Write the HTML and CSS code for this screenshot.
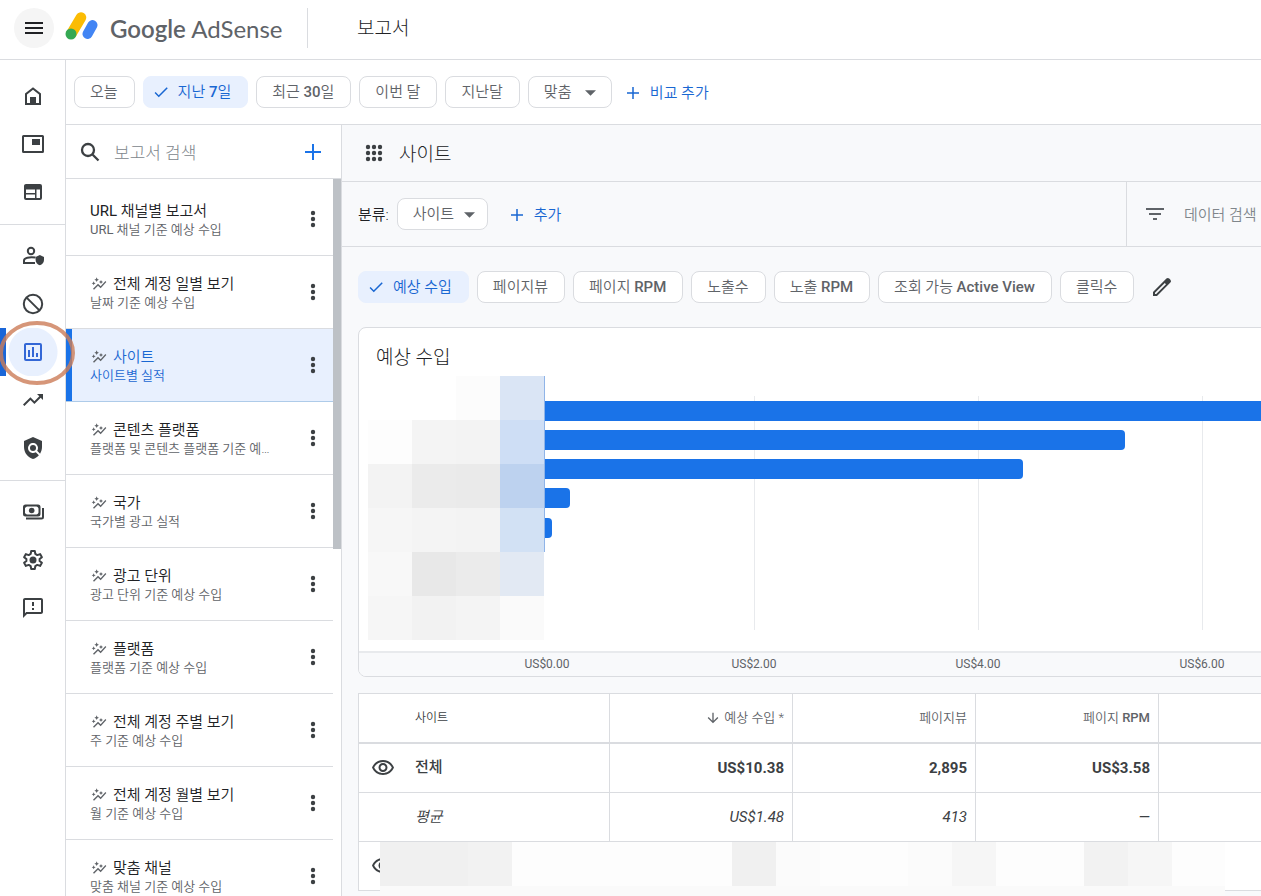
FILE: index.html
```html
<!DOCTYPE html>
<html lang="ko">
<head>
<meta charset="utf-8">
<title>Google AdSense - 보고서</title>
<link rel="stylesheet" href="styles.css">
</head>
<body>
<svg class="defs" aria-hidden="true">
  <symbol id="more" viewBox="0 0 24 24"><circle cx="12" cy="6" r="2.200"/><circle cx="12" cy="12" r="2.200"/><circle cx="12" cy="18" r="2.200"/></symbol>
  <symbol id="spark" viewBox="0 0 24 24"><path d="M14.060 9.940 12 9l2.060-.94L15 6l.94 2.060L18 9l-2.060.94L15 12zM4 14l.94-2.060L7 11l-2.060-.94L4 8l-.94 2.060L1 11l2.060.94zm4.500-5 1.090-2.410L12 5.500 9.590 4.410 8.500 2 7.410 4.410 5 5.500l2.410 1.090zm-4 11.500 6-6.010 4 4L23 8.930l-1.410-1.410-7.090 7.970-4-4L3 19z"/></symbol>
  <symbol id="check" viewBox="0 0 24 24"><path d="M9 16.170 4.830 12l-1.420 1.410L9 19 21 7l-1.410-1.410z"/></symbol>
  <symbol id="plus" viewBox="0 0 24 24"><path d="M20 13h-7v7h-2v-7H4v-2h7V4h2v7h7z"/></symbol>
  <symbol id="caret" viewBox="0 0 12 6"><path d="M0 0h12L6 6z"/></symbol>
  <symbol id="eye" viewBox="0 0 24 24"><path d="M12 6c3.790 0 7.170 2.130 8.820 5.500C19.170 14.870 15.790 17 12 17s-7.170-2.130-8.820-5.500C4.830 8.130 8.210 6 12 6m0-2C7 4 2.730 7.110 1 11.500 2.730 15.890 7 19 12 19s9.270-3.110 11-7.500C21.270 7.110 17 4 12 4zm0 5c1.380 0 2.500 1.120 2.500 2.500S13.380 14 12 14s-2.500-1.120-2.500-2.500S10.620 9 12 9m0-2c-2.480 0-4.500 2.020-4.500 4.500S9.520 16 12 16s4.500-2.020 4.500-4.500S14.480 7 12 7z"/></symbol>
</svg>

<header class="topbar">
  <button class="menu-button" aria-label="메뉴"><svg class="icon" viewBox="0 0 24 24"><path d="M3 18h18v-2H3v2zm0-5h18v-2H3v2zm0-7v2h18V6H3z"/></svg></button>
  <a class="brand" href="#">
    <svg class="brand-mark" viewBox="0 0 34 30" aria-hidden="true">
      <path d="M6.500 22.500 16 6.500" stroke="#fbbc04" stroke-width="10.500" stroke-linecap="round"/>
      <path d="M22.500 23 27.500 14" stroke="#4285f4" stroke-width="10" stroke-linecap="round"/>
      <circle cx="6" cy="23" r="5.500" fill="#34a853"/>
    </svg>
    <span class="brand-name"><b>Google</b> AdSense</span>
  </a>
  <h1 class="page-title">보고서</h1>
</header>

<div class="shell">
  <nav class="rail" aria-label="기본 메뉴">
    <a class="rail-item" href="#" aria-label="홈"><svg class="icon" viewBox="0 0 24 24"><path fill-rule="evenodd" d="M4 9.500 12 3.300l8 6.200V21H4zm2 1V19h3v-6h6v6h3v-8.500l-6-4.700z"/></svg></a>
    <a class="rail-item" href="#" aria-label="광고"><svg class="icon" viewBox="0 0 24 24"><path fill-rule="evenodd" d="M2.500 3h19A1.500 1.500 0 0 1 23 4.500v15a1.500 1.500 0 0 1-1.500 1.500h-19A1.500 1.500 0 0 1 1 19.500v-15A1.500 1.500 0 0 1 2.500 3zM3 5v14h18V5zM11 7h8v6h-8z"/></svg></a>
    <a class="rail-item" href="#" aria-label="사이트"><svg class="icon" viewBox="0 0 24 24"><path fill-rule="evenodd" d="M5 4h14a2 2 0 0 1 2 2v12a2 2 0 0 1-2 2H5a2 2 0 0 1-2-2V6c0-1.100.9-2 2-2zm0 5.500v3.500h9V9.500zM5 14.500V18h9v-3.500zm10.500-5V18H19V9.500z"/></svg></a>
    <hr class="rail-rule">
    <a class="rail-item" href="#" aria-label="개인 정보 보호"><svg class="icon" viewBox="0 0 24 24"><g fill="none" stroke="currentColor" stroke-width="2"><circle cx="10" cy="7" r="3.200"/><path d="M14.500 13.500C8 12.500 3 14 3 16.500V19h11"/></g><path d="m18.800 11 4.200 2v3c0 2.600-1.700 4.400-4.200 5.300-2.500-.9-4.200-2.700-4.200-5.300v-3z"/></svg></a>
    <a class="rail-item" href="#" aria-label="차단 관리"><svg class="icon" viewBox="0 0 24 24"><g fill="none" stroke="currentColor" stroke-width="2"><circle cx="12" cy="12" r="9.200"/><path d="m5.600 5.600 12.800 12.800"/></g></svg></a>
    <a class="rail-item rail-current" href="#" aria-label="보고서" aria-current="page"><svg class="icon" viewBox="0 0 24 24"><path fill-rule="evenodd" d="M5 3h14a2 2 0 0 1 2 2v14a2 2 0 0 1-2 2H5a2 2 0 0 1-2-2V5c0-1.100.9-2 2-2zm0 2v14h14V5zM7 10h2v7H7zM11 7h2v10h-2zM15 13h2v4h-2z"/></svg>
      <svg class="marker" viewBox="0 0 78 66" aria-hidden="true"><ellipse cx="39" cy="33" rx="36" ry="30"/></svg></a>
    <a class="rail-item" href="#" aria-label="최적화"><svg class="icon" viewBox="0 0 24 24"><path d="m16 6 2.290 2.290-4.880 4.880-4-4L2 16.590 3.410 18l6-6 4 4 6.300-6.290L22 12V6z"/></svg></a>
    <a class="rail-item" href="#" aria-label="정책 센터"><svg class="icon" viewBox="0 0 24 24"><path d="m21 5-9-4-9 4v6c0 5.550 3.840 10.740 9 12 2.300-.56 4.330-1.900 5.880-3.710l-3.120-3.120c-1.940 1.290-4.580 1.070-6.290-.64-1.950-1.950-1.950-5.120 0-7.070 1.950-1.950 5.120-1.950 7.070 0 1.710 1.710 1.920 4.350.64 6.290l2.900 2.900C20.290 15.690 21 13.380 21 11z"/><circle cx="12" cy="12" r="3"/></svg></a>
    <hr class="rail-rule">
    <a class="rail-item" href="#" aria-label="지급"><svg class="icon" viewBox="0 0 24 24"><g fill="none" stroke="currentColor" stroke-width="2"><rect x="3" y="5.500" width="15.500" height="10" rx="1.500"/><path d="M5 18.500h15.500a1.500 1.500 0 0 0 1.500-1.500V8"/></g><circle cx="10.700" cy="10.500" r="2.800"/><path d="M3 5.500h3.500L3 9zM18.500 5.500H15l3.500 3.500zM3 15.500h3.500L3 12zM18.500 15.500H15l3.500-3.500z"/></svg></a>
    <a class="rail-item" href="#" aria-label="계정"><svg class="icon" viewBox="0 0 24 24"><path d="M10.200 3h3.600l.5 2.900 2 1.200 2.800-1 1.800 3.100-2.300 1.900v1.800l2.300 1.900-1.800 3.100-2.800-1-2 1.200-.5 2.900h-3.600l-.5-2.900-2-1.200-2.800 1-1.800-3.100 2.300-1.900v-1.800L3.100 9.200l1.800-3.100 2.800 1 2-1.200z" fill="none" stroke="currentColor" stroke-width="2" stroke-linejoin="round"/><circle cx="12" cy="12" r="3.500"/></svg></a>
    <a class="rail-item" href="#" aria-label="의견"><svg class="icon" viewBox="0 0 24 24"><path d="M20 2H4c-1.100 0-1.990.9-1.990 2L2 22l4-4h14c1.100 0 2-.9 2-2V4c0-1.100-.9-2-2-2zm0 14H5.170l-1.170 1.170V4h16zM11 12h2v2h-2zm0-6h2v4h-2z"/></svg></a>
  </nav>

  <div class="workspace">
    <div class="chip-row date-row">
      <button class="chip">오늘</button>
      <button class="chip chip-on"><svg class="icon-sm"><use href="#check"/></svg><span>지난 <b>7</b>일</span></button>
      <button class="chip"><span>최근 <b>30</b>일</span></button>
      <button class="chip">이번 달</button>
      <button class="chip">지난달</button>
      <div class="drop drop-wide"><select class="chip" aria-label="기간"><option>맞춤</option></select><svg class="caret"><use href="#caret"/></svg></div>
      <button class="link-button"><svg class="icon-sm"><use href="#plus"/></svg>비교 추가</button>
    </div>

    <div class="columns">
      <aside class="reports">
        <div class="report-search">
          <svg class="icon" viewBox="0 0 24 24"><path d="M10 4a6 6 0 1 0 0 12 6 6 0 0 0 0-12zm4.500 10.500 6 6" fill="none" stroke="currentColor" stroke-width="2.300"/></svg>
          <input type="text" aria-label="보고서 검색" placeholder="보고서 검색">
          <button class="icon-button add" aria-label="새 보고서"><svg class="icon"><use href="#plus"/></svg></button>
        </div>
        <div class="report-scroll">
          <ul class="report-list">
            <li class="report"><a href="#"><span class="report-name"><span><i>URL</i> 채널별 보고서</span></span><span class="report-note"><i>URL</i> 채널 기준 예상 수입</span></a><button class="icon-button" aria-label="더보기"><svg class="icon"><use href="#more"/></svg></button></li>
            <li class="report"><a href="#"><span class="report-name"><svg class="spark"><use href="#spark"/></svg>전체 계정 일별 보기</span><span class="report-note">날짜 기준 예상 수입</span></a><button class="icon-button" aria-label="더보기"><svg class="icon"><use href="#more"/></svg></button></li>
            <li class="report report-on"><a href="#"><span class="report-name"><svg class="spark"><use href="#spark"/></svg>사이트</span><span class="report-note">사이트별 실적</span></a><button class="icon-button" aria-label="더보기"><svg class="icon"><use href="#more"/></svg></button></li>
            <li class="report"><a href="#"><span class="report-name"><svg class="spark"><use href="#spark"/></svg>콘텐츠 플랫폼</span><span class="report-note">플랫폼 및 콘텐츠 플랫폼 기준 예…</span></a><button class="icon-button" aria-label="더보기"><svg class="icon"><use href="#more"/></svg></button></li>
            <li class="report"><a href="#"><span class="report-name"><svg class="spark"><use href="#spark"/></svg>국가</span><span class="report-note">국가별 광고 실적</span></a><button class="icon-button" aria-label="더보기"><svg class="icon"><use href="#more"/></svg></button></li>
            <li class="report"><a href="#"><span class="report-name"><svg class="spark"><use href="#spark"/></svg>광고 단위</span><span class="report-note">광고 단위 기준 예상 수입</span></a><button class="icon-button" aria-label="더보기"><svg class="icon"><use href="#more"/></svg></button></li>
            <li class="report"><a href="#"><span class="report-name"><svg class="spark"><use href="#spark"/></svg>플랫폼</span><span class="report-note">플랫폼 기준 예상 수입</span></a><button class="icon-button" aria-label="더보기"><svg class="icon"><use href="#more"/></svg></button></li>
            <li class="report"><a href="#"><span class="report-name"><svg class="spark"><use href="#spark"/></svg>전체 계정 주별 보기</span><span class="report-note">주 기준 예상 수입</span></a><button class="icon-button" aria-label="더보기"><svg class="icon"><use href="#more"/></svg></button></li>
            <li class="report"><a href="#"><span class="report-name"><svg class="spark"><use href="#spark"/></svg>전체 계정 월별 보기</span><span class="report-note">월 기준 예상 수입</span></a><button class="icon-button" aria-label="더보기"><svg class="icon"><use href="#more"/></svg></button></li>
            <li class="report"><a href="#"><span class="report-name"><svg class="spark"><use href="#spark"/></svg>맞춤 채널</span><span class="report-note">맞춤 채널 기준 예상 수입</span></a><button class="icon-button" aria-label="더보기"><svg class="icon"><use href="#more"/></svg></button></li>
          </ul>
          <div class="scroll-thumb"></div>
        </div>
      </aside>

      <main class="content">
        <div class="content-head">
          <svg class="icon" viewBox="0 0 24 24"><g><circle cx="6" cy="6" r="2.200"/><circle cx="12" cy="6" r="2.200"/><circle cx="18" cy="6" r="2.200"/><circle cx="6" cy="12" r="2.200"/><circle cx="12" cy="12" r="2.200"/><circle cx="18" cy="12" r="2.200"/><circle cx="6" cy="18" r="2.200"/><circle cx="12" cy="18" r="2.200"/><circle cx="18" cy="18" r="2.200"/></g></svg>
          <h2>사이트</h2>
        </div>
        <div class="filter-row">
          <div class="breakdown">
            <label for="dimension">분류:</label>
            <div class="drop"><select class="chip" id="dimension"><option>사이트</option></select><svg class="caret"><use href="#caret"/></svg></div>
            <button class="link-button"><svg class="icon-sm"><use href="#plus"/></svg>추가</button>
          </div>
          <div class="data-search">
            <svg class="icon" viewBox="0 0 24 24"><path d="M10 18h4v-2h-4v2zM3 6v2h18V6H3zm3 7h12v-2H6v2z"/></svg>
            <input type="text" aria-label="데이터 검색" placeholder="데이터 검색">
          </div>
        </div>

        <div class="chip-row metric-row">
          <button class="chip chip-on"><svg class="icon-sm"><use href="#check"/></svg>예상 수입</button>
          <button class="chip">페이지뷰</button>
          <button class="chip"><span>페이지 <b>RPM</b></span></button>
          <button class="chip">노출수</button>
          <button class="chip"><span>노출 <b>RPM</b></span></button>
          <button class="chip"><span>조회 가능 <b>Active View</b></span></button>
          <button class="chip">클릭수</button>
          <button class="icon-button edit" aria-label="측정항목 수정"><svg class="icon" viewBox="0 0 24 24"><path fill-rule="evenodd" d="m20.400 4.800-1.200-1.200a2 2 0 0 0-2.800 0L3 17v4h4L20.400 7.600a2 2 0 0 0 0-2.800zM6.200 19H5v-1.200L14.800 8 16 9.200z"/></svg></button>
        </div>

        <section class="card">
          <h3>예상 수입</h3>
          <div class="plot">
            <svg class="bars" width="1120" height="275" aria-hidden="true">
              <path d="M395.500 20v234M619.500 20v234M843.500 20v234M1067.500 20v234" stroke="#e8eaed"/>
              <g fill="#1a73e8">
                <path d="M180 25h916v20H180z"/>
                <path d="M180 54h582a4 4 0 0 1 4 4v12a4 4 0 0 1-4 4H180z"/>
                <path d="M180 83h480a4 4 0 0 1 4 4v12a4 4 0 0 1-4 4H180z"/>
                <path d="M180 112h27a4 4 0 0 1 4 4v12a4 4 0 0 1-4 4h-27z"/>
                <path d="M180 142h9a4 4 0 0 1 4 4v12a4 4 0 0 1-4 4h-9z"/>
              </g>
              <g shape-rendering="crispEdges">
                <path fill="#8fb4e8" d="M185 0h1v176h-1z"/>
                <path fill="#fff" d="M9 0h88v44H9z"/><path fill="#fcfcfc" d="M97 0h44v44H97z"/><path fill="#dae5f5" d="M141 0h44v44h-44z"/>
                <path fill="#fdfdfd" d="M9 44h44v44H9z"/><path fill="#f4f4f4" d="M53 44h44v44H53z"/><path fill="#f3f3f3" d="M97 44h44v44H97z"/><path fill="#cedef5" d="M141 44h44v44h-44z"/>
                <path fill="#f3f3f3" d="M9 88h44v44H9z"/><path fill="#ebebeb" d="M53 88h44v44H53z"/><path fill="#eaeaea" d="M97 88h44v44H97z"/><path fill="#bdd2ef" d="M141 88h44v44h-44z"/>
                <path fill="#f6f6f6" d="M9 132h44v44H9z"/><path fill="#f4f4f4" d="M53 132h44v44H53z"/><path fill="#f3f3f3" d="M97 132h44v44H97z"/><path fill="#d2e1f4" d="M141 132h44v44h-44z"/>
                <path fill="#f8f8f8" d="M9 176h44v44H9z"/><path fill="#e8e8e8" d="M53 176h44v44H53z"/><path fill="#ebebeb" d="M97 176h44v44H97z"/><path fill="#e2e9f3" d="M141 176h44v44h-44z"/>
                <path fill="#f6f6f6" d="M9 220h44v44H9z"/><path fill="#f2f2f2" d="M53 220h44v44H53z"/><path fill="#f4f4f4" d="M97 220h44v44H97z"/><path fill="#fafafa" d="M141 220h44v44h-44z"/>
              </g>
            </svg>
          </div>
          <div class="axis"><span>US$0.00</span><span>US$2.00</span><span>US$4.00</span><span>US$6.00</span></div>
        </section>

        <div class="table-wrap">
          <table class="data">
            <colgroup><col class="col-name"><col class="col-num"><col class="col-num"><col class="col-num"><col class="col-num"></colgroup>
            <thead>
              <tr><th class="name name-head">사이트</th><th><svg class="sort" viewBox="0 0 24 24"><path d="m20 12-1.410-1.410L13 16.170V4h-2v12.170l-5.580-5.590L4 12l8 8z"/></svg>예상 수입 *</th><th>페이지뷰</th><th>페이지 <b>RPM</b></th><th></th></tr>
            </thead>
            <tbody>
              <tr class="total"><td class="name"><button class="icon-button eye" aria-label="표시"><svg class="icon"><use href="#eye"/></svg></button>전체</td><td>US$10.38</td><td>2,895</td><td>US$3.58</td><td></td></tr>
              <tr class="average"><td class="name name-plain">평균</td><td>US$1.48</td><td>413</td><td>—</td><td></td></tr>
              <tr class="site"><td class="name" colspan="5"><button class="icon-button eye" aria-label="표시"><svg class="icon"><use href="#eye"/></svg></button></td></tr>
            </tbody>
          </table>
          <svg class="redaction" width="845" height="60" shape-rendering="crispEdges" aria-hidden="true">
            <path fill="#fdfdfd" d="M0 0h845v44H0z"/><path fill="#f0f0f0" d="M0 0h88v44H0zM352 0h44v44h-44z"/><path fill="#f2f2f2" d="M88 0h44v44H88zM704 0h44v44h-44z"/><path fill="#fbfbfb" d="M396 0h44v44h-44zM528 0h44v44h-44z"/><path fill="#f6f6f6" d="M572 0h44v44h-44zM748 0h44v44h-44z"/><path fill="#fafafa" d="M0 44h845v16H0z"/>
          </svg>
        </div>
      </main>
    </div>
  </div>
</div>
</body>
</html>
```
FILE: styles.css
```css
* { box-sizing: border-box; }

body {
  margin: 0;
  height: 100vh;
  display: flex;
  flex-direction: column;
  overflow: hidden;
  background: #fff;
  color: #202124;
  font-family: Roboto, "Noto Sans CJK KR", sans-serif;
  font-size: 15px;
  font-weight: 350;
  line-height: 20px;
}

button, input, select {
  font: inherit;
  color: inherit;
  border: 0;
  padding: 0;
  background: none;
}

input { outline: 0; min-width: 0; }
input::placeholder { color: #80868b; opacity: 1; }
a { color: inherit; text-decoration: none; }
b { font-weight: 500; }
i { font-style: normal; font-weight: 400; }
h1, h2, h3 { margin: 0; padding-top: 3px; font-size: 19px; line-height: 24px; font-weight: 300; }
svg { display: block; flex: none; fill: currentColor; }

.defs { position: absolute; width: 0; height: 0; }
.icon { width: 24px; height: 24px; }
.icon-sm { width: 18px; height: 18px; }

.icon-button {
  display: flex;
  flex: none;
  align-items: center;
  justify-content: center;
  color: #3c4043;
}

/* top bar */
.topbar {
  display: flex;
  flex: none;
  align-items: center;
  height: 60px;
  padding: 0 0 4px 14px;
  border-bottom: 1px solid #dadce0;
}

.menu-button {
  display: flex;
  align-items: center;
  justify-content: center;
  width: 40px;
  height: 40px;
  border-radius: 50%;
  background: #f5f5f5;
}

.brand {
  display: flex;
  align-items: center;
  gap: 11px;
  height: 40px;
  margin-left: 11px;
  padding-right: 22px;
  border-right: 1px solid #dadce0;
  color: #5f6368;
}

.brand-mark { width: 34px; height: 30px; margin-bottom: 4px; fill: none; }
.brand-name { min-width: 175px; padding-top: 2px; font-family: Lato, sans-serif; font-size: 24px; font-weight: 400; line-height: 30px; white-space: nowrap; }
.brand-name b { font-weight: 600; }
.page-title { margin-left: 49px; }

/* navigation rail */
.shell { display: flex; flex: 1; min-height: 0; }

.rail {
  flex: none;
  width: 66px;
  padding-top: 12px;
  border-right: 1px solid #dadce0;
}

.rail-item {
  position: relative;
  display: flex;
  align-items: center;
  justify-content: center;
  height: 48px;
  color: #3c4043;
}

.rail-rule { height: 1px; margin: 8px 0 7px; border: 0; background: #dadce0; }

.rail-current {
  color: #3367d6;
  background: linear-gradient(90deg, #1a66d8 6px, transparent 6px), radial-gradient(circle at 33px 24px, #e8f0fe 24px, transparent 25px);
}

.marker {
  position: absolute;
  z-index: 2;
  top: -8px;
  left: -2px;
  width: 78px;
  height: 66px;
  fill: none;
  stroke: #cc7d58;
  stroke-width: 4px;
  opacity: 0.8;
}

/* chips */
.workspace { display: flex; flex: 1; flex-direction: column; min-width: 0; }
.chip-row { display: flex; flex: none; align-items: center; gap: 8px; }
.date-row { height: 65px; padding-left: 8px; border-bottom: 1px solid #dadce0; }

.chip {
  display: flex;
  flex: none;
  align-items: center;
  gap: 8px;
  height: 32px;
  padding: 0 16px 0 15px;
  border: 1px solid #dadce0;
  border-radius: 8px;
  background: #fff;
  color: #5f6368;
  white-space: nowrap;
}

.chip-on { padding-left: 8px; border-color: #e8f0fe; background: #e8f0fe; color: #1967d2; }

.drop { position: relative; }
.drop select { appearance: none; padding-right: 32px; }
.drop-wide select { padding-right: 39px; }
.caret { position: absolute; top: 14px; right: 13px; width: 11px; height: 6px; color: #5f6368; pointer-events: none; }
.drop-wide .caret { right: 16px; }

.link-button { display: flex; align-items: center; gap: 8px; margin-left: 4px; padding-top: 2px; color: #1967d2; white-space: nowrap; }

/* report list */
.columns { display: flex; flex: 1; min-height: 0; }

.reports {
  display: flex;
  flex: none;
  flex-direction: column;
  width: 276px;
  border-right: 1px solid #dadce0;
}

.report-search {
  display: flex;
  flex: none;
  align-items: center;
  height: 54px;
  padding: 0 16px 0 12px;
  border-bottom: 1px solid #dadce0;
  color: #3c4043;
}

.report-search input { flex: 1; margin-left: 12px; padding-top: 3px; font-size: 17px; line-height: 24px; font-weight: 300; }
.report-search .add { color: #1a73e8; }

.report-scroll { display: flex; flex: 1; min-height: 0; overflow: hidden; align-items: flex-start; }
.report-list { flex: 1; min-width: 0; margin: 0; padding: 4px 0 0; list-style: none; }
.scroll-thumb { flex: none; width: 8px; height: 370px; background: #bdc1c6; }

.report {
  display: flex;
  align-items: center;
  height: 73px;
  padding: 0 8px 0 24px;
  border-bottom: 1px solid #dadce0;
}

.report a { flex: 1; min-width: 0; padding-top: 1px; }
.report-name { display: flex; align-items: center; gap: 5px; line-height: 20px; }
.report-note { display: block; font-size: 13px; line-height: 18px; color: #5f6368; white-space: nowrap; }
.report .icon-button { margin-left: 16px; }
.spark { width: 18px; height: 16px; color: #5f6368; }

.report-on { background: #e8f0fe; box-shadow: inset 6px 0 #1a73e8; border-bottom-color: #aecbe9; }
.report-on .report-name, .report-on .report-note { color: #1967d2; }

/* content */
.content { flex: 1; min-width: 0; overflow: hidden; background: #f8f9fb; }

.content-head { display: flex; align-items: center; gap: 13px; height: 57px; padding-left: 20px; border-bottom: 1px solid #dadce0; color: #3c4043; }
.content-head h2 { color: #202124; }

.filter-row { display: flex; height: 65px; border-bottom: 1px solid #dadce0; }
.breakdown { display: flex; flex: 1; align-items: center; gap: 8px; padding-left: 16px; }
.breakdown label { padding-top: 2px; }
.breakdown .link-button { margin-left: 12px; }
.data-search { display: flex; flex: none; align-items: center; gap: 17px; width: 135px; padding-left: 16px; border-left: 1px solid #dadce0; color: #5f6368; }
.data-search input { flex: 1; padding-top: 1px; }

.metric-row { padding: 24px 0 24px 16px; }
.metric-row .edit { margin-left: 8px; }

.card { width: max-content; margin-left: 16px; border: 1px solid #dadce0; border-radius: 8px; background: #fff; overflow: hidden; }
.card h3 { padding: 18px 0 6px 17px; }
.axis {
  display: grid;
  grid-template-columns: 190px 224px 224px 224px;
  padding-left: 93px;
  border-top: 2px solid #e8eaed;
  background: #f8f9fb;
  color: #5f6368;
  font-size: 12px;
  font-weight: 400;
  line-height: 23px;
  text-align: center;
}

/* table */
.table-wrap { position: relative; margin: 16px 0 0 16px; width: max-content; }

.data {
  width: 983px;
  table-layout: fixed;
  border-collapse: separate;
  border-spacing: 0;
  border-top: 1px solid #dadce0;
  border-left: 1px solid #dadce0;
  background: #fff;
  color: #3c4043;
}

.col-name { width: 251px; }
.col-num { width: 183px; }

.data th, .data td { height: 49px; padding: 0 8px; border-right: 1px solid #dadce0; border-bottom: 1px solid #dadce0; text-align: right; }
.data th { height: 50px; border-bottom-width: 2px; color: #5f6368; font-size: 13px; font-weight: 350; }
.data .name { padding-left: 12px; text-align: left; }
.data .name-head, .data .name-plain { padding-left: 56px; }
.data .name-head { font-size: 12px; color: #3c4043; }
.sort { display: inline-block; width: 16px; height: 16px; margin-right: 3px; vertical-align: -4px; }
.eye { display: inline-flex; margin-right: 20px; vertical-align: middle; }
.total td { font-weight: 700; }
.total .name { font-weight: 500; }
.average td { font-style: italic; font-weight: 400; }
.average .name { font-weight: 350; }

.redaction { position: absolute; top: 149px; left: 22px; }
```
